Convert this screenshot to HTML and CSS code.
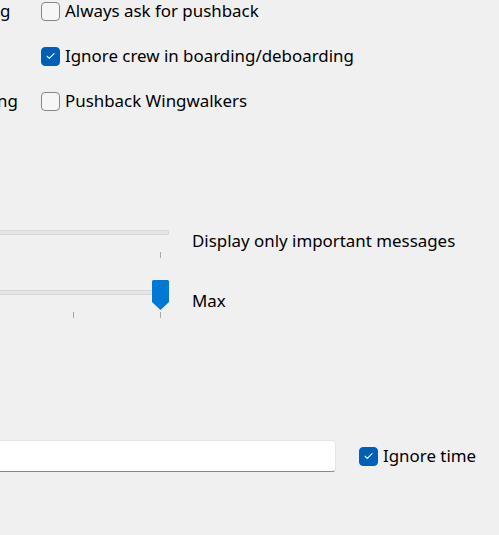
FILE: index.html
```html
<!DOCTYPE html>
<html>
<head>
<meta charset="utf-8">
<link rel="stylesheet" href="styles.css">
</head>
<body>
<div class="page">
  <div class="checks">
    <span class="side side-a">g</span>
    <label class="cb"><span class="box"></span><span class="txt">Always ask for pushback</span></label>
    <span class="side"></span>
    <label class="cb"><span class="box on"><svg viewBox="0 0 20 20" width="20" height="20"><path d="M6 10.3l2.6 2.6L14.2 7.3" fill="none" stroke="#fff" stroke-width="1.3" stroke-linecap="round" stroke-linejoin="round"/></svg></span><span class="txt">Ignore crew in boarding/deboarding</span></label>
    <span class="side side-b">ng</span>
    <label class="cb"><span class="box"></span><span class="txt">Pushback Wingwalkers</span></label>
  </div>

  <div class="slider-row first">
    <div class="slider">
      <div class="track"></div>
      <div class="ticks"><i></i></div>
    </div>
    <span class="slabel">Display only important messages</span>
  </div>

  <div class="slider-row second">
    <div class="slider">
      <div class="track"></div>
      <div class="thumb"><svg viewBox="0 0 17 30" width="17" height="30"><path d="M1.5 0h14a1.5 1.5 0 0 1 1.5 1.5V22l-8.5 8L0 22V1.5A1.5 1.5 0 0 1 1.5 0z" fill="#0078d4"/></svg></div>
      <div class="ticks"><i></i><i></i></div>
    </div>
    <span class="slabel">Max</span>
  </div>

  <div class="input-row">
    <div class="textbox"></div>
    <label class="cb"><span class="box on"><svg viewBox="0 0 20 20" width="20" height="20"><path d="M6 10.3l2.6 2.6L14.2 7.3" fill="none" stroke="#fff" stroke-width="1.3" stroke-linecap="round" stroke-linejoin="round"/></svg></span><span class="txt">Ignore time</span></label>
  </div>
</div>
</body>
</html>
```
FILE: styles.css
```css
html, body {
  margin: 0;
  padding: 0;
  background: #f0f0f0;
}
body {
  width: 499px;
  height: 535px;
  overflow: hidden;
  font-family: "Noto Sans", "Open Sans", sans-serif;
  font-size: 16.9px;
  color: #000;
}
.page {
  display: flex;
  flex-direction: column;
}
.checks {
  display: grid;
  grid-template-columns: 41px auto;
  grid-auto-rows: 20px;
  row-gap: 25px;
  align-items: center;
  padding-top: 1px;
}
.side {
  line-height: 20px;
}
.side-a { padding-left: 0; }
.side-b { margin-left: -3px; }
.cb {
  display: flex;
  align-items: center;
  gap: 5px;
  line-height: 20px;
}
.box {
  width: 19px;
  height: 19px;
  box-sizing: border-box;
  border: 1px solid #878787;
  border-radius: 4px;
  background: #f6f6f6;
  display: flex;
  align-items: center;
  justify-content: center;
  flex: none;
}
.box.on {
  background: #005fb8;
  border-color: #005fb8;
}
.box svg { display: block; }
.slider-row {
  display: flex;
  align-items: flex-start;
}
.slider-row.first { margin-top: 110px; }
.slider-row.second { margin-top: 22px; }
.slider {
  width: 169px;
  position: relative;
  flex: none;
}
.track {
  height: 5px;
  box-sizing: border-box;
  border: 1px solid #d6d6d6;
  border-left: none;
  border-radius: 0 2px 2px 0;
  background: #e6e6e6;
}
.first .slider { padding-top: 9px; }
.second .slider { padding-top: 10px; }
.ticks {
  display: flex;
  justify-content: flex-end;
  gap: 86px;
  padding-right: 8px;
  margin-top: 17px;
}
.ticks i {
  display: block;
  width: 1px;
  height: 6px;
  background: #a8a8a8;
}
.thumb {
  position: absolute;
  left: 152px;
  top: 0;
  width: 17px;
  height: 30px;
}
.thumb svg { display: block; }
.slabel {
  margin-left: 23px;
  line-height: 20px;
}
.first .slabel { margin-top: 10px; }
.second .slabel { margin-top: 11px; }
.input-row {
  display: flex;
  align-items: center;
  margin-top: 122px;
}
.textbox {
  width: 336px;
  height: 32px;
  box-sizing: border-box;
  background: #fff;
  border: 1px solid #e5e5e5;
  border-bottom: 1px solid #8a8a8a;
  border-left: none;
  border-radius: 0 4px 4px 0;
  flex: none;
}
.input-row .cb {
  margin-left: 23px;
}
```
